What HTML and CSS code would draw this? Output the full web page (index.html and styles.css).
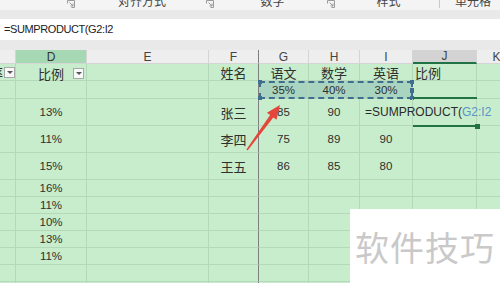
FILE: index.html
```html
<!DOCTYPE html>
<html lang="zh">
<head>
<meta charset="utf-8">
<title>SUMPRODUCT</title>
<link rel="stylesheet" href="styles.css">
</head>
<body>
<div class="app">
  <div class="ribbon">
    <div class="grp g1"><span class="lbl"></span><svg class="launch" width="8" height="8" viewBox="0 0 8 8"><path d="M0.5 3.5V0.5H7.5V7.5H4.5" fill="none" stroke="#9a9a9a"/><path d="M2.5 2.5L6 6M6 3.5V6H3.5" fill="none" stroke="#9a9a9a"/></svg></div>
    <div class="grp g2"><span class="lbl">对齐方式</span><svg class="launch" width="8" height="8" viewBox="0 0 8 8"><path d="M0.5 3.5V0.5H7.5V7.5H4.5" fill="none" stroke="#9a9a9a"/><path d="M2.5 2.5L6 6M6 3.5V6H3.5" fill="none" stroke="#9a9a9a"/></svg></div>
    <div class="grp g3"><span class="lbl">数字</span><svg class="launch" width="8" height="8" viewBox="0 0 8 8"><path d="M0.5 3.5V0.5H7.5V7.5H4.5" fill="none" stroke="#9a9a9a"/><path d="M2.5 2.5L6 6M6 3.5V6H3.5" fill="none" stroke="#9a9a9a"/></svg></div>
    <div class="grp g4"><span class="lbl">样式</span></div>
    <div class="grp g5"><span class="lbl">单元格</span></div>
  </div>
  <div class="band"></div>
  <div class="fbar">=SUMPRODUCT(G2:I2</div>
  <div class="band"></div>

  <div class="sheet">
    <!-- header -->
    <div class="c h"></div><div class="c h hd">D</div><div class="c h">E</div><div class="c h fz">F</div><div class="c h">G</div><div class="c h">H</div><div class="c h">I</div><div class="c h hj">J</div><div class="c h">K</div>
    <!-- row 1 -->
    <div class="c a1"><span class="zh">率</span><i class="dd"></i></div>
    <div class="c d1"><span class="zh">比例</span><i class="dd"></i></div>
    <div class="c"></div><div class="c fz zh">姓名</div><div class="c zh">语文</div><div class="c zh">数学</div><div class="c zh">英语</div><div class="c zh left">比例</div><div class="c"></div>
    <!-- row 2 -->
    <div class="c"></div><div class="c"></div><div class="c"></div><div class="c fz"></div><div class="c sel">35%</div><div class="c sel">40%</div><div class="c sel">30%</div><div class="c"></div><div class="c"></div>
    <!-- row 3 -->
    <div class="c"></div><div class="c">13%</div><div class="c"></div><div class="c fz zh">张三</div><div class="c">85</div><div class="c">90</div><div class="c fx"><span>=SUMPRODUCT(</span><span class="ref">G2:I2</span></div><div class="c"></div><div class="c"></div>
    <!-- row 4 -->
    <div class="c"></div><div class="c">11%</div><div class="c"></div><div class="c fz zh">李四</div><div class="c">75</div><div class="c">89</div><div class="c">90</div><div class="c"></div><div class="c"></div>
    <!-- row 5 -->
    <div class="c"></div><div class="c">15%</div><div class="c"></div><div class="c fz zh">王五</div><div class="c">86</div><div class="c">85</div><div class="c">80</div><div class="c"></div><div class="c"></div>
    <!-- rows 6-10 -->
    <div class="c"></div><div class="c">16%</div><div class="c"></div><div class="c fz"></div><div class="c"></div><div class="c"></div><div class="c"></div><div class="c"></div><div class="c"></div>
    <div class="c"></div><div class="c">11%</div><div class="c"></div><div class="c fz"></div><div class="c"></div><div class="c"></div><div class="c"></div><div class="c"></div><div class="c"></div>
    <div class="c"></div><div class="c">10%</div><div class="c"></div><div class="c fz"></div><div class="c"></div><div class="c"></div><div class="c"></div><div class="c"></div><div class="c"></div>
    <div class="c"></div><div class="c">13%</div><div class="c"></div><div class="c fz"></div><div class="c"></div><div class="c"></div><div class="c"></div><div class="c"></div><div class="c"></div>
    <div class="c"></div><div class="c">11%</div><div class="c"></div><div class="c fz"></div><div class="c"></div><div class="c"></div><div class="c"></div><div class="c"></div><div class="c"></div>
    <!-- rows 11-12 -->
    <div class="c"></div><div class="c"></div><div class="c"></div><div class="c fz"></div><div class="c"></div><div class="c"></div><div class="c"></div><div class="c"></div><div class="c"></div>
    <div class="c"></div><div class="c"></div><div class="c"></div><div class="c fz"></div><div class="c"></div><div class="c"></div><div class="c"></div><div class="c"></div><div class="c"></div>

    <div class="selbox"><i class="hd1 tl"></i><i class="hd1 tr"></i><i class="hd1 bl"></i><i class="hd1 br"></i><i class="hd1 mr"></i></div>
    <div class="active"><i class="fill"></i></div>
  </div>

  <svg class="arrow" width="500" height="283" viewBox="0 0 500 283">
    <polygon points="246.4,149.6 270.1,115.1 266.9,112.8 280,105 276.5,119.8 273.3,117.5 247.6,150.4" fill="#e5463b"/>
  </svg>

  <div class="wm">软件技巧</div>
</div>
</body>
</html>
```

FILE: styles.css
```css
html, body {
  margin: 0;
  padding: 0;
}

.app {
  width: 500px;
  height: 283px;
  overflow: hidden;
  position: relative;
  background: #c7edcc;
  font-family: "Liberation Sans", "Noto Sans CJK SC", sans-serif;
  color: #2f2f2f;
}

/* ribbon */
.ribbon {
  height: 10px;
  background: #f4f4f4;
  display: flex;
  overflow: hidden;
}
.grp {
  display: flex;
  align-items: flex-start;
  flex: none;
}
.g1 { width: 78px; }
.g2 { width: 140px; }
.g3 { width: 120px; }
.g4 { width: 101px; height: 8px; border-right: 1px solid #c9c9c9; }
.g5 { width: 66px; }
.lbl {
  flex: 1;
  text-align: center;
  font-family: "Noto Sans CJK SC", sans-serif;
  font-size: 12px;
  line-height: 14px;
  margin-top: -6px;
  color: #444;
}
.launch {
  flex: none;
  margin-right: 3px;
}
.g2 .launch { margin-right: 4px; }

.band {
  height: 9px;
  background: #e9e9e9;
}
.band + .fbar + .band { height: 10px; }

.fbar {
  height: 21px;
  background: #ffffff;
  font-size: 11px;
  line-height: 21px;
  padding-left: 4px;
  letter-spacing: -0.4px;
  color: #222;
}

/* sheet */
.sheet {
  position: relative;
  display: grid;
  grid-template-columns: 16px 71px 122px 50px 50px 51px 53px 64px 40px;
  grid-template-rows: 14px 17px 18px 27px 27px 27px repeat(7, 17px);
}
.c {
  box-sizing: border-box;
  border-right: 1px solid #b5d7ba;
  border-bottom: 1px solid #b5d7ba;
  display: flex;
  align-items: center;
  justify-content: center;
  white-space: nowrap;
  min-width: 0;
  font-size: 11.5px;
}
.h {
  background: #eeeeee;
  border-color: #d5d5d5;
  color: #444;
  font-size: 12px;
}
.hd { background: #a6d8b4; color: #333; }
.hj { background: #d3d3d3; border-bottom: 2px solid #217346; }
.c.fz { border-right-color: #7e7e7e; }
.zh {
  font-family: "Noto Sans CJK SC", sans-serif;
  font-size: 13px;
}
.left { justify-content: flex-start; padding-left: 2px; }
.sel { background: #a9d5c0; }

.a1 {
  justify-content: flex-end;
  gap: 1px;
}
.d1 {
  display: grid;
  grid-template-columns: 1fr auto 1fr;
  align-items: center;
}
.d1 .zh { grid-column: 2; }
.d1 .dd { grid-column: 3; justify-self: end; margin-right: 2px; }

.dd {
  flex: none;
  width: 11px;
  height: 11px;
  box-sizing: border-box;
  border: 1px solid #a8a8a8;
  background: #f8f8f8;
  display: flex;
  align-items: center;
  justify-content: center;
}
.dd::after {
  content: "";
  border-left: 3px solid transparent;
  border-right: 3px solid transparent;
  border-top: 3px solid #555;
}

.fx {
  justify-content: flex-start;
  padding-left: 5px;
  z-index: 1;
  font-size: 12px;
  color: #2a2a2a;
}
.ref { color: #5b92c9; }

/* selection marquee G2:I2 */
.selbox {
  position: absolute;
  left: 259px;
  top: 31px;
  width: 154px;
  height: 18px;
  box-sizing: border-box;
  border: 2px dashed #3f6f90;
}
.hd1 {
  position: absolute;
  width: 4px;
  height: 4px;
  background: #3f6f90;
}
.tl { left: -3px; top: -3px; }
.tr { right: -3px; top: -3px; }
.bl { left: -3px; bottom: -3px; }
.br { right: -3px; bottom: -3px; }
.mr { right: -3px; top: 5px; height: 5px; }

/* active cell J3 */
.active {
  position: absolute;
  left: 413px;
  top: 47px;
  width: 64px;
  height: 30px;
  box-sizing: border-box;
  border-top: 2px solid #217346;
  border-bottom: 2px solid #217346;
}
.fill {
  position: absolute;
  right: -3px;
  bottom: -4px;
  width: 5px;
  height: 5px;
  background: #217346;
}

.arrow {
  position: absolute;
  left: 0;
  top: 0;
  pointer-events: none;
}

.wm {
  position: absolute;
  left: 350px;
  top: 209px;
  width: 150px;
  height: 74px;
  background: #ffffff;
  display: flex;
  align-items: center;
  justify-content: center;
  font-family: "Noto Sans CJK SC", sans-serif;
  font-size: 34px;
  letter-spacing: 1px;
  color: #c9c9c9;
}
```
